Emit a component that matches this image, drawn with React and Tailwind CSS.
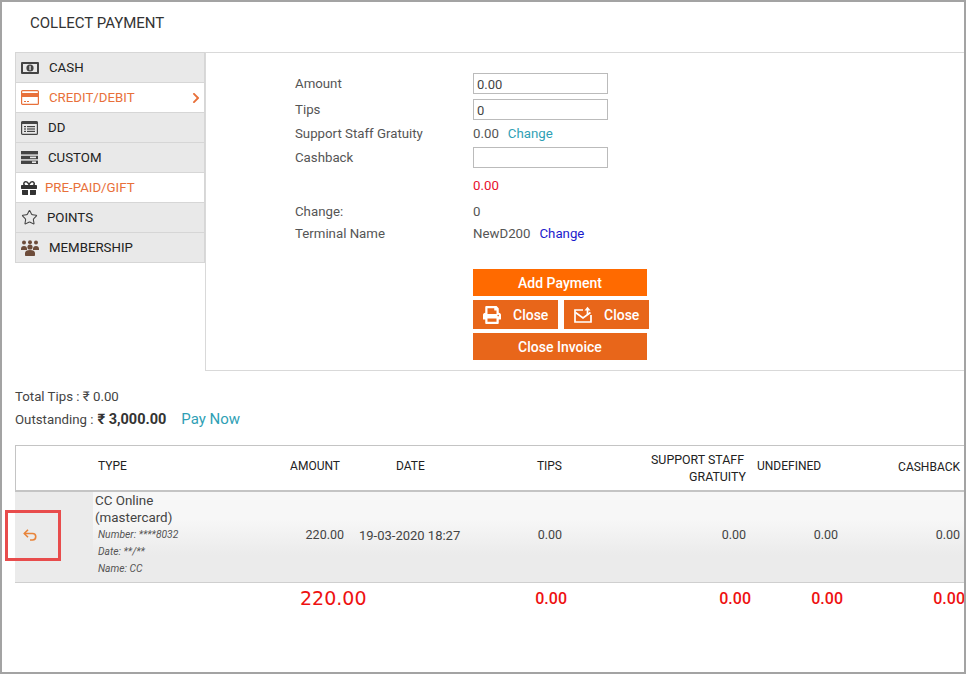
import { FaGift, FaPrint, FaChevronRight } from "react-icons/fa";
import { LuStar } from "react-icons/lu";

function CashIcon() {
  return (
    <svg width="18" height="12" viewBox="0 0 18 12">
      <rect width="18" height="12" rx="1" fill="#444" />
      <rect x="2" y="2" width="14" height="8" fill="#e9e9e9" />
      <circle cx="9" cy="6" r="3.6" fill="#444" />
      <rect x="8.4" y="3.8" width="1.3" height="4.4" fill="#e9e9e9" />
    </svg>
  );
}

function CardIcon() {
  return (
    <svg width="18" height="15" viewBox="0 0 18 15">
      <rect x="0.6" y="0.6" width="16.8" height="13.8" rx="1" fill="none" stroke="#e8703a" strokeWidth="1.2" />
      <rect x="0.6" y="3" width="16.8" height="4" fill="#e8703a" />
      <rect x="3" y="11" width="2" height="1" fill="#e8703a" />
      <rect x="6" y="11" width="2" height="1" fill="#e8703a" />
    </svg>
  );
}

function DdIcon() {
  return (
    <svg width="17" height="14" viewBox="0 0 17 14">
      <rect x="0.6" y="0.6" width="15.8" height="12.8" rx="1" fill="none" stroke="#444" strokeWidth="1.2" />
      <rect x="0.6" y="0.6" width="15.8" height="2.4" fill="#444" />
      <rect x="3" y="5" width="2" height="1.2" fill="#444" />
      <rect x="6" y="5" width="8" height="1.2" fill="#444" />
      <rect x="3" y="7.4" width="2" height="1.2" fill="#444" />
      <rect x="6" y="7.4" width="8" height="1.2" fill="#444" />
      <rect x="3" y="9.8" width="2" height="1.2" fill="#444" />
      <rect x="6" y="9.8" width="8" height="1.2" fill="#444" />
    </svg>
  );
}

function CustomIcon() {
  return (
    <svg width="17" height="13" viewBox="0 0 17 13">
      <rect width="17" height="3.4" fill="#444" />
      <rect y="4.8" width="17" height="3.4" fill="#444" />
      <rect y="9.6" width="17" height="3.4" fill="#444" />
      <rect x="9" y="5.6" width="6" height="1.6" fill="#e9e9e9" />
      <rect x="11" y="10.4" width="4" height="1.6" fill="#e9e9e9" />
    </svg>
  );
}

function MembersIcon() {
  return (
    <svg width="18" height="16" viewBox="0 0 18 16" fill="#6d4c3a">
      <circle cx="3" cy="2.6" r="2" />
      <circle cx="9" cy="2.2" r="2" />
      <circle cx="15" cy="2.6" r="2" />
      <path d="M0 9c0-2 1-3 3-3s3 1 3 3v1H0zM12 9c0-2 1-3 3-3s3 1 3 3v1h-6z" />
      <circle cx="9" cy="7" r="2.6" />
      <path d="M4 15v-2c0-2 2-3 5-3s5 1 5 3v2c0 .6-.4 1-1 1H5c-.6 0-1-.4-1-1z" />
    </svg>
  );
}

function MailUpIcon() {
  return (
    <svg width="18" height="17" viewBox="0 0 18 17" fill="none" stroke="#fff" strokeWidth="1.7">
      <path d="M9 4H1v12h16V9" />
      <path d="M1.5 6.5 9 12l7.5-5.5" />
      <path d="M13.5 9V3" />
      <path d="M10.5 4.5 13.5 .8l3 3.7z" fill="#fff" stroke="none" />
    </svg>
  );
}

function UndoIcon() {
  return (
    <svg width="15" height="12" viewBox="0 0 15 12" fill="none" stroke="#e8843a" strokeWidth="1.6">
      <path d="M5 .8 1.3 4.5 5 8.2" />
      <path d="M1.5 4.5h8a3.2 3.2 0 0 1 0 6.5H7" />
    </svg>
  );
}

const methods = [
  { label: "CASH", icon: <CashIcon />, iconClass: "w-[28px]" },
  { label: "CREDIT/DEBIT", icon: <CardIcon />, iconClass: "w-[28px]", active: true, arrow: true },
  { label: "DD", icon: <DdIcon />, iconClass: "w-[27px]" },
  { label: "CUSTOM", icon: <CustomIcon />, iconClass: "w-[27px]" },
  { label: "PRE-PAID/GIFT", icon: <FaGift className="text-[16px] text-[#333]" />, iconClass: "w-[24px]", active: true },
  { label: "POINTS", icon: <LuStar className="text-[17px] text-[#444] stroke-[1.5]" />, iconClass: "w-[26px]" },
  { label: "MEMBERSHIP", icon: <MembersIcon />, iconClass: "w-[28px]" },
];

function Sidebar() {
  return (
    <div className="w-[190px] shrink-0 self-start border-t border-[#d6d6d6]">
      {methods.map((m) => (
        <div
          key={m.label}
          className={`h-[30px] flex items-center pl-[5px] pr-[2px] border-b border-r border-[#d6d6d6] border-l text-[13.25px] ${
            m.active ? "bg-white text-[#e8703a]" : "bg-[#e9e9e9] text-[#222]"
          }`}
        >
          <span className={`${m.iconClass} shrink-0 flex items-center`}>{m.icon}</span>
          <span className="flex-1">{m.label}</span>
          {m.arrow && <FaChevronRight className="text-[12px] text-[#e8703a]" />}
        </div>
      ))}
    </div>
  );
}

function FormRow({ label, className, children }) {
  return (
    <div className={`flex items-center ${className}`}>
      <div className="w-[178px] shrink-0">{label}</div>
      <div className="flex items-center">{children}</div>
    </div>
  );
}

function Field({ value }) {
  return (
    <input
      readOnly
      value={value}
      className="w-[135px] h-[21px] border border-[#bbb] px-[3px] pt-[2px] text-[13px] text-[#444] outline-none"
    />
  );
}

function PaymentForm() {
  return (
    <div className="flex-1 h-[319px] border-l border-b border-t border-[#d9d9d9] pt-[20px] pl-[89px] text-[13.25px] text-[#555]">
      <FormRow label="Amount" className="h-[21px]">
        <Field value="0.00" />
      </FormRow>
      <FormRow label="Tips" className="h-[21px] mt-[5px]">
        <Field value="0" />
      </FormRow>
      <FormRow label="Support Staff Gratuity" className="h-[21px] mt-[3px]">
        <span>0.00</span>
        <span className="ml-[9px] text-[#2f9fb5]">Change</span>
      </FormRow>
      <FormRow label="Cashback" className="h-[21px] mt-[3px]">
        <Field value="" />
      </FormRow>
      <FormRow label="" className="h-[21px] mt-[7px] text-[#e8112d]">
        0.00
      </FormRow>
      <FormRow label="Change:" className="h-[21px] mt-[5px]">
        0
      </FormRow>
      <FormRow label="Terminal Name" className="h-[21px] mt-[1px]">
        <span>NewD200</span>
        <span className="ml-[9px] text-[#1a1acc]">Change</span>
      </FormRow>

      <div className="ml-[178px] mt-[25px] w-[176px] text-white text-[14px] font-medium">
        <div className="w-[174px] h-[27px] pt-[2px] bg-[#ff6a00] flex items-center justify-center">Add Payment</div>
        <div className="flex gap-[6px] mt-[4px]">
          <div className="w-[85px] h-[29px] bg-[#e8661a] flex items-center pl-[10px] gap-[12px]">
            <FaPrint className="text-[18px]" />
            <span className="pt-[2px]">Close</span>
          </div>
          <div className="w-[85px] h-[29px] bg-[#e8661a] flex items-center pl-[10px] gap-[12px]">
            <MailUpIcon />
            <span className="pt-[2px]">Close</span>
          </div>
        </div>
        <div className="w-[174px] h-[27px] pt-[2px] mt-[4px] bg-[#e8661a] flex items-center justify-center">Close Invoice</div>
      </div>
    </div>
  );
}

const cols = "grid grid-cols-[78px_150px_106px_126px_92px_184px_92px_122px]";

function PaymentsTable() {
  return (
    <div className="ml-[13px] mt-[14px] relative text-[12px] w-[956px]">
      <div className={`${cols} h-[47px] pb-[4px] border-t border-l border-[#c4c4c4] border-b-2 items-center text-[#222]`}>
        <div />
        <div className="pl-[4px]">TYPE</div>
        <div className="text-right pr-[10px]">AMOUNT</div>
        <div className="pl-[46px]">DATE</div>
        <div className="text-right pr-[6px]">TIPS</div>
        <div className="text-right pr-[6px] leading-[17px] pt-[5px] text-[12.4px]">
          <span className="pr-[2px]">SUPPORT STAFF</span>
          <br />
          GRATUITY
        </div>
        <div className="pl-[5px]">UNDEFINED</div>
        <div className="text-right pr-[6px] pt-[2px]">CASHBACK</div>
      </div>

      <div className={`${cols} h-[91px] border-b border-[#cfcfcf] items-center text-[#444] text-[12.5px] bg-[linear-gradient(#f7f7f7_30%,#ebebeb_70%)]`}>
        <div className="h-full bg-[#ebebeb] flex items-center pl-[8px] pb-[4px]">
          <UndoIcon />
        </div>
        <div className="pl-[2px] leading-[17px] -mt-[4px]">
          <div className="text-[13.4px]">CC Online</div>
          <div className="text-[13.4px]">(mastercard)</div>
          <div className="italic text-[10.3px] text-[#555] pl-[3px]">Number: ****8032</div>
          <div className="italic text-[10.3px] text-[#555] pl-[3px]">Date: **/**</div>
          <div className="italic text-[10.3px] text-[#555] pl-[3px]">Name: CC</div>
        </div>
        <div className="text-right pr-[5px] -mt-[2px]">220.00</div>
        <div className="pl-[10px] whitespace-nowrap text-[13px] -mt-[2px]">19-03-2020 18:27</div>
        <div className="text-right pr-[5px] -mt-[2px]">0.00</div>
        <div className="text-right pr-[5px] -mt-[2px]">0.00</div>
        <div className="text-right pr-[5px] -mt-[2px]">0.00</div>
        <div className="text-right pr-[5px] -mt-[2px]">0.00</div>
      </div>

      <div className={`${cols} h-[32px] items-center text-[#ee1111] text-[16px] font-medium`}>
        <div />
        <div />
        <div className="pl-[57px] font-['DejaVu_Sans',sans-serif] font-normal text-[19px] whitespace-nowrap">220.00</div>
        <div />
        <div className="text-right">0.00</div>
        <div className="text-right">0.00</div>
        <div className="text-right">0.00</div>
        <div className="text-right">0.00</div>
      </div>

      <div className="absolute left-[-10px] top-[65px] w-[56px] h-[51px] border-[3px] border-[#e84c4c]" />
    </div>
  );
}

export default function App() {
  return (
    <div className="w-[966px] h-[674px] overflow-hidden border-2 border-[#a3a3a3] bg-white font-['Roboto',sans-serif]">
      <div className="h-[50px] pl-[28px] pt-[10px] text-[15px] text-[#333]">COLLECT PAYMENT</div>
      <div className="flex pl-[13px]">
        <Sidebar />
        <PaymentForm />
      </div>
      <div className="pl-[13px] mt-[16px] text-[13.25px] text-[#444]">
        <div>Total Tips : ₹ 0.00</div>
        <div className="flex items-baseline mt-[1px]">
          <span>Outstanding :</span>
          <span className="ml-[4px] text-[14.5px] font-bold text-[#333]">₹ 3,000.00</span>
          <span className="ml-[15px] text-[15px] text-[#2f9fb5]">Pay Now</span>
        </div>
      </div>
      <PaymentsTable />
    </div>
  );
}
